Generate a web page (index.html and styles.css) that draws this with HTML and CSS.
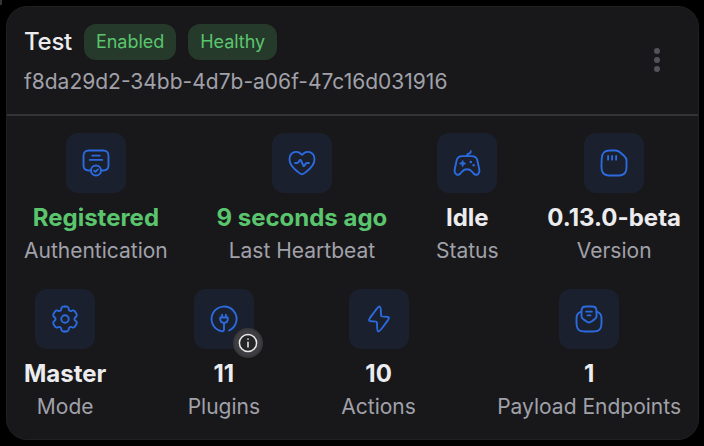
FILE: index.html
```html
<!DOCTYPE html>
<html lang="en">
<head>
<meta charset="utf-8">
<title>Test</title>
<link rel="stylesheet" href="styles.css">
</head>
<body>
<span class="edge"></span>
<article class="card">
  <header class="head">
    <div class="ident">
      <div class="title-row">
        <h1 class="title">Test</h1>
        <span class="chip">Enabled</span>
        <span class="chip">Healthy</span>
      </div>
      <p class="uuid">f8da29d2-34bb-4d7b-a06f-47c16d031916</p>
    </div>
    <button class="menu" aria-label="Menu"><i></i><i></i><i></i></button>
  </header>
  <div class="body">
    <div class="row">
      <div class="stat">
        <div class="tile"><svg class="icon" viewBox="0 0 24 24"><path d="M8 18H6.5C3.2 18 2 16.8 2 14V6.5C2 3.2 3.2 2 6.5 2H17.5C20.8 2 22 3.2 22 6.5V14C22 16.8 20.8 18 17.5 18H16M9 6.1H15M7 9.5H17"/><circle cx="12" cy="18" r="4"/><path d="M10.5 18.2L11.5 19.1L13.6 17.1"/></svg></div>
        <div class="value good">Registered</div>
        <div class="label">Authentication</div>
      </div>
      <div class="stat">
        <div class="tile"><svg class="icon" viewBox="0 0 24 24"><path d="M12 5.5C8.5 1.2 2 2.9 2 9.14C2 14 6 16.8 8.96 19.3C10 20.2 11 21 12 21S14 20.2 15.04 19.3C18 16.8 22 14 22 9.14C22 2.9 15.5 1.2 12 5.5Z"/><path d="M6.5 12H8C8.7 12 9 11.8 9.4 11L10.1 9.9C10.5 9.3 10.9 9.4 11.2 10L13 14C13.3 14.7 13.8 14.7 14.1 14L14.6 13C15 12.2 15.3 12 16 12H17.5"/></svg></div>
        <div class="value good">9 seconds ago</div>
        <div class="label">Last Heartbeat</div>
      </div>
      <div class="stat">
        <div class="tile"><svg class="icon" viewBox="0 0 24 24"><path d="M12 6.5V6C12 5.2 12.4 4.8 13.2 4.6L13.8 4.4C14.6 4.2 15 3.8 15 3V2.5M8.2 6.5H15.8C18.4 6.5 19.7 7.5 20.3 10L21.8 17C22.5 20.5 19.6 22.8 17.3 20.4L15.8 18.7C14.8 17.5 14 17 12 17S9.2 17.5 8.2 18.7L6.7 20.4C4.4 22.8 1.5 20.5 2.2 17L3.7 10C4.3 7.5 5.6 6.5 8.2 6.5ZM8.5 10.6V14.2M6.7 12.4H10.3"/><path class="dot" d="M15 11.2H15.01M17.3 13.8H17.31"/></svg></div>
        <div class="value">Idle</div>
        <div class="label">Status</div>
      </div>
      <div class="stat">
        <div class="tile"><svg class="icon" viewBox="0 0 24 24"><path d="M2.2 8.5C2.5 3.8 4.2 2 8.5 2H13.2C15 2 15.6 2.4 17 3.6L20 6.2C21.5 7.5 22 8.2 22 10V14.5C22 20.2 20.2 22 14.5 22H9.5C3.8 22 2 20.2 2 14.5C2 12 2.1 10.5 2.2 8.5ZM7.3 6.3V9.3M10.5 6.3V9.3M13.7 6.3V9.3"/></svg></div>
        <div class="value">0.13.0-beta</div>
        <div class="label">Version</div>
      </div>
    </div>
    <div class="row">
      <div class="stat">
        <div class="tile"><svg class="icon" viewBox="0 0 24 24"><defs><path id="cog" d="M12 2C11.07 2 10.6 2 10.23 2.15C9.74 2.36 9.36 2.74 9.15 3.23C9.06 3.46 9.02 3.72 9.01 4.1C8.99 4.66 8.7 5.17 8.22 5.45C7.74 5.73 7.15 5.72 6.65 5.46C6.32 5.28 6.07 5.18 5.83 5.15C5.31 5.08 4.78 5.22 4.35 5.55C4.04 5.79 3.81 6.19 3.34 7C2.87 7.81 2.64 8.21 2.59 8.6C2.52 9.13 2.66 9.66 2.99 10.08C3.13 10.28 3.34 10.44 3.66 10.64C4.13 10.94 4.44 11.44 4.44 12C4.44 12.56 4.13 13.06 3.66 13.36C3.34 13.56 3.13 13.72 2.99 13.92C2.66 14.34 2.52 14.87 2.59 15.4C2.64 15.79 2.87 16.19 3.34 17C3.81 17.81 4.04 18.21 4.35 18.45C4.78 18.78 5.31 18.92 5.83 18.85C6.07 18.82 6.32 18.72 6.65 18.54C7.15 18.28 7.74 18.27 8.22 18.55C8.7 18.83 8.99 19.34 9.01 19.9C9.02 20.28 9.06 20.54 9.15 20.77C9.36 21.26 9.74 21.64 10.23 21.85C10.6 22 11.07 22 12 22"/></defs><use href="#cog"/><use href="#cog" transform="matrix(-1 0 0 1 24 0)"/><circle cx="12" cy="12" r="3"/></svg></div>
        <div class="value">Master</div>
        <div class="label">Mode</div>
      </div>
      <div class="stat">
        <div class="tile"><svg class="icon" viewBox="0 0 24 24"><path d="M16 21.2A10 10 0 1 0 9.8 21.75C11.2 22.1 12 21.5 12 20.3V15M10.5 8.5V10.5M13.5 8.5V10.5M9 10.8H15V12C15 13.8 13.8 15 12 15S9 13.8 9 12Z"/></svg>
          <span class="badge"><svg viewBox="0 0 20 20"><circle cx="10" cy="10" r="8.6"/><path d="M10 9.2V14M10 6.1V6.2"/></svg></span>
        </div>
        <div class="value">11</div>
        <div class="label">Plugins</div>
      </div>
      <div class="stat">
        <div class="tile"><svg class="icon" viewBox="0 0 24 24"><path d="M5.67 9.91L8.73 5.77C10.71 3.09 11.7 1.75 12.62 2.04C13.55 2.32 13.55 3.96 13.55 7.25V7.56C13.55 8.74 13.55 9.33 13.93 9.71C14.33 10.09 14.95 10.09 16.18 10.09C18.4 10.09 19.51 10.09 19.89 10.76C20.26 11.48 19.62 12.35 18.33 14.09L15.27 18.23C13.29 20.91 12.3 22.25 11.38 21.96C10.45 21.68 10.45 20.04 10.45 16.75V16.44C10.45 15.26 10.45 14.67 10.07 14.29C9.67 13.91 9.05 13.91 7.82 13.91C5.6 13.91 4.49 13.91 4.11 13.24C3.74 12.52 4.38 11.65 5.67 9.91Z"/></svg></div>
        <div class="value">10</div>
        <div class="label">Actions</div>
      </div>
      <div class="stat">
        <div class="tile"><svg class="icon" viewBox="0 0 24 24"><path d="M6 6.1C3.2 6.6 2 8.3 2 11.8V14.5C2 20.4 3.8 22 9.5 22H14.5C20.2 22 22 20.4 22 14.5V11.8C22 8.3 20.8 6.6 18 6.1"/><path d="M6 10V5.5C6 3 7 2 9.5 2H14.5C17 2 18 3 18 5.5V10C18 11 17.5 11.4 16.6 12.1L14 14C12.5 15.1 11.5 15.1 10 14L7.4 12.1C6.5 11.4 6 11 6 10ZM9.7 6.1H14.3M10.8 9.1H13.2"/></svg></div>
        <div class="value">1</div>
        <div class="label">Payload Endpoints</div>
      </div>
    </div>
  </div>
</article>
</body>
</html>
```
FILE: styles.css
```css
* { box-sizing: border-box; }
body {
  margin: 0;
  padding: 6px 5px 6px 6px;
  height: 446px;
  background: #000;
  font-family: Inter, "Liberation Sans", sans-serif;
  color: #ececee;
  overflow: hidden;
}
.edge {
  position: absolute;
  left: 0;
  top: 0;
  width: 2px;
  height: 5px;
  background: #343436;
}
.card {
  height: 434px;
  border: 1px solid #202022;
  border-radius: 21px;
  background: #18181a;
}
.head {
  display: flex;
  justify-content: space-between;
  align-items: center;
  height: 109px;
  padding: 0 17px;
  border-bottom: 2px solid #343436;
}
.title-row {
  display: flex;
  align-items: center;
  gap: 12px;
  height: 36px;
}
.title { margin: 0; font-size: 24px; font-weight: 500; line-height: 36px; letter-spacing: -0.25px; }
.chip {
  height: 36px;
  padding: 0 12px;
  border-radius: 12px;
  background: #263a2b;
  color: #5ac56d;
  font-size: 18px;
  line-height: 35px;
  letter-spacing: -0.04px;
}
.uuid { margin: 6px 0 0; font-size: 21px; line-height: 32px; color: #a1a1aa; }
.ident { padding-top: 1px; }
.menu {
  display: flex;
  flex-direction: column;
  align-items: center;
  gap: 3px;
  width: 48px;
  padding: 0 0 2px;
  border: 0;
  background: none;
}
.menu i { width: 6px; height: 6px; border-radius: 50%; background: #52525b; }
.body {
  display: flex;
  flex-direction: column;
  gap: 24px;
  padding: 17.4px 17px 0;
}
.row { display: flex; justify-content: space-between; height: 132px; }
.stat { display: flex; flex-direction: column; align-items: center; }
.tile {
  position: relative;
  display: flex;
  flex-shrink: 0;
  align-items: center;
  justify-content: center;
  width: 60px;
  height: 60px;
  border-radius: 12px;
  background: #1a202d;
}
.icon {
  width: 30px;
  height: 30px;
  fill: none;
  stroke: #2c6bdf;
  stroke-width: 1.5;
  stroke-linecap: round;
  stroke-linejoin: round;
}
.dot { stroke-width: 2; }
.badge {
  position: absolute;
  right: -9px;
  bottom: -9px;
  display: flex;
  align-items: center;
  justify-content: center;
  width: 30px;
  height: 30px;
  border: 2px solid #38383b;
  border-radius: 50%;
  background: #3f3f43;
}
.badge svg {
  width: 20px;
  height: 20px;
  fill: #252527;
  stroke: #ececee;
  stroke-width: 1.5;
  stroke-linecap: round;
}
.value { margin-top: 6.8px; font-size: 24px; font-weight: 700; line-height: 36px; white-space: nowrap; }
.good { color: #5ac56d; }
.label { font-size: 21px; line-height: 30px; color: #a1a1aa; white-space: nowrap; }
```
